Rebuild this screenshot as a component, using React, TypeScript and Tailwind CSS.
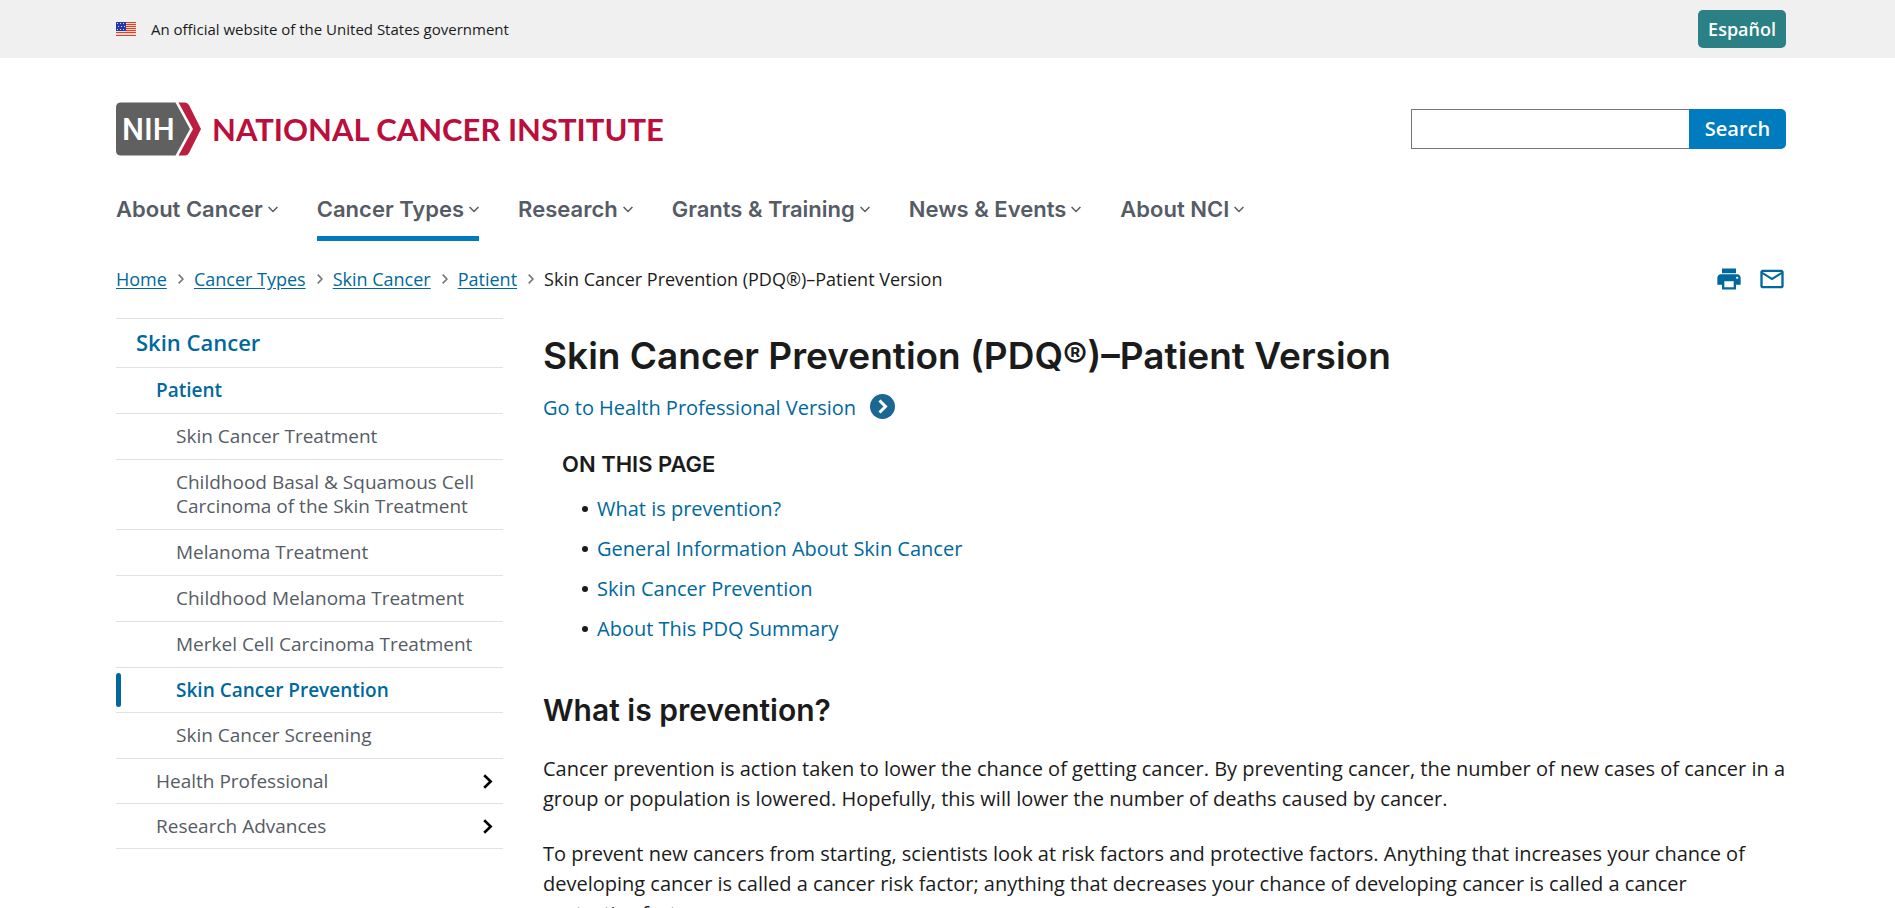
import React from "react";

const topics = [
  { label: "About Cancer", active: false },
  { label: "Cancer Types", active: true },
  { label: "Research", active: false },
  { label: "Grants & Training", active: false },
  { label: "News & Events", active: false },
  { label: "About NCI", active: false },
];

const crumbs = ["Home", "Cancer Types", "Skin Cancer", "Patient"];

const patientPages = [
  "Skin Cancer Treatment",
  "Childhood Basal & Squamous Cell Carcinoma of the Skin Treatment",
  "Melanoma Treatment",
  "Childhood Melanoma Treatment",
  "Merkel Cell Carcinoma Treatment",
  "Skin Cancer Prevention",
  "Skin Cancer Screening",
];

const onThisPage = [
  "What is prevention?",
  "General Information About Skin Cancer",
  "Skin Cancer Prevention",
  "About This PDQ Summary",
];

function Flag() {
  return (
    <svg width="20" height="14" viewBox="0 0 20 14" aria-hidden="true" className="shrink-0">
      <rect width="20" height="14" fill="#fbd9d0" />
      {[0, 2, 4, 6, 8, 10, 13].map((y) => (
        <rect key={y} y={y} width="20" height="1" fill="#e0402a" />
      ))}
      <rect width="10" height="9" fill="#2438a8" />
      {[1, 4, 7].map((y) =>
        [1, 4, 7].map((x) => (
          <rect key={`${x}-${y}`} x={x + (y === 4 ? 1 : 0)} y={y} width="1" height="1" fill="#d5dcf8" />
        )),
      )}
    </svg>
  );
}

function Logo() {
  return (
    <a href="#home" className="flex items-center gap-[11px]" aria-label="NIH National Cancer Institute">
      <svg width="85" height="54" viewBox="0 0 85 54" aria-hidden="true">
        <path d="M5 0.5H59.500L74 27 59.500 53.500H5Q0 53.500 0 48.500V5.500Q0 0.500 5 0.500Z" fill="#606060" />
        <path d="M62.500 0.500H69Q71.500 0.500 73 3L85 27 73 51Q71.500 53.500 69 53.500H62.500L77 27Z" fill="#bb1f40" />
        <text x="6" y="38" fontSize="31" fill="#fff" fontFamily="Roboto, sans-serif" fontWeight="500">
          NIH
        </text>
      </svg>
      <span className="font-['Lato',sans-serif] text-[31px] leading-[54px] font-bold text-[#bb0e3d]">
        NATIONAL CANCER INSTITUTE
      </span>
    </a>
  );
}

function NavChevron() {
  return (
    <svg width="10" height="7" viewBox="0 0 10 7" fill="none" stroke="#565c65" strokeWidth="1.5" aria-hidden="true">
      <path d="M0.600 0.900 5 5.500 9.400 0.900" />
    </svg>
  );
}

function CrumbChevron() {
  return (
    <svg width="6" height="10" viewBox="0 0 6 10" fill="none" stroke="#71767a" strokeWidth="1.600" aria-hidden="true">
      <path d="M0.700 0.600 5 5 0.700 9.400" />
    </svg>
  );
}

function SideChevron() {
  return (
    <svg width="10" height="15" viewBox="0 0 10 15" fill="none" stroke="#000" strokeWidth="2.600" aria-hidden="true">
      <path d="M1.200 1.200 7.700 7.500 1.200 13.800" />
    </svg>
  );
}

function SideLink({ label, active }: { label: string; active: boolean }) {
  return (
    <li className="relative border-b border-[#dfe1e2]">
      {active && <span className="absolute inset-y-[5px] left-0 w-[5px] rounded-full bg-[#00689d]" />}
      <a
        href="#page"
        className={
          active
            ? "block py-[10px] pr-5 pl-[60px] font-semibold text-[#00689d]"
            : "block pt-[10px] pr-5 pb-[11px] pl-[60px]"
        }
        aria-current={active ? "page" : undefined}
      >
        {label}
      </a>
    </li>
  );
}

export default function App() {
  return (
    <div className="min-h-screen bg-white font-['Open_Sans',sans-serif] text-[#1b1b1b]">
      <div className="flex h-[58px] items-center justify-between bg-[#f0f0f0] pr-[109px] pl-[116px]">
        <div className="flex items-center gap-[15px] text-[15px]">
          <Flag />
          <span>An official website of the United States government</span>
        </div>
        <a
          href="#espanol"
          lang="es"
          className="flex h-[38px] items-center rounded-[5px] bg-[#2a8084] px-[10px] text-[18px] font-semibold text-white"
        >
          Español
        </a>
      </div>

      <header className="pr-[109px] pl-[116px]">
        <div className="flex items-center justify-between pt-11">
          <Logo />
          <form className="flex h-10" role="search" onSubmit={(e) => e.preventDefault()}>
            <input
              type="search"
              aria-label="Search"
              className="w-[278px] border border-r-0 border-[#71767a] bg-white px-2 text-[18px] outline-none"
            />
            <button type="submit" className="w-[97px] rounded-r-[5px] bg-[#007bbd] text-[20px] font-semibold text-white">
              Search
            </button>
          </form>
        </div>

        <nav aria-label="Primary" className="mt-[30px] flex gap-[39px] font-['Inter',sans-serif] text-[22px] leading-[30px] font-semibold text-[#565c65]">
          {topics.map((t) => (
            <button
              key={t.label}
              type="button"
              className={
                t.active
                  ? "flex items-center gap-[5px] border-b-[5px] border-[#007bbd] pt-2 pb-[12px]"
                  : "flex items-center gap-[5px] border-b-[5px] border-transparent pt-2 pb-[12px]"
              }
            >
              {t.label}
              <NavChevron />
            </button>
          ))}
        </nav>
      </header>

      <div className="flex items-center justify-between pt-[22px] pr-[109px] pl-[116px]">
        <nav aria-label="Breadcrumb">
          <ol className="flex items-center text-[18px] leading-[32px]">
            {crumbs.map((c) => (
              <li key={c} className="flex items-center">
                <a href="#crumb" className="text-[#00689d] underline underline-offset-2">
                  {c}
                </a>
                <span className="pr-[10px] pl-[11px]">
                  <CrumbChevron />
                </span>
              </li>
            ))}
            <li aria-current="page">Skin Cancer Prevention (PDQ®)–Patient Version</li>
          </ol>
        </nav>
        <div className="flex gap-[15px]">
          <button type="button" aria-label="Print">
            <svg width="28" height="28" viewBox="0 0 24 24" fill="#00689d">
              <path d="M19 8H5c-1.660 0-3 1.340-3 3v6h4v4h12v-4h4v-6c0-1.660-1.340-3-3-3zm-3 11H8v-5h8v5zm3-7c-.55 0-1-.45-1-1s.45-1 1-1 1 .45 1 1-.45 1-1 1zm-1-9H6v4h12V3z" />
            </svg>
          </button>
          <button type="button" aria-label="Email">
            <svg width="28" height="28" viewBox="0 0 24 24" fill="#00689d">
              <path d="M22 6c0-1.100-.9-2-2-2H4c-1.100 0-2 .9-2 2v12c0 1.100.9 2 2 2h16c1.100 0 2-.9 2-2V6zm-2 0-8 5-8-5h16zm0 12H4V8l8 5 8-5v10z" />
            </svg>
          </button>
        </div>
      </div>

      <div className="flex items-start gap-10 pt-[23px] pr-[109px] pl-[116px]">
        <nav aria-label="Section" className="w-[387px] shrink-0 text-[19px] leading-[24px] text-[#565c65]">
          <ul className="border-t border-[#dfe1e2]">
            <li className="border-b border-[#dfe1e2]">
              <a href="#skin" className="block pt-[10px] pb-3 pl-5 text-[22px] leading-[26px] font-semibold text-[#00689d]">
                Skin Cancer
              </a>
            </li>
            <li className="border-b border-[#dfe1e2]">
              <a href="#patient" className="block pt-[10px] pb-[11px] pl-10 font-semibold text-[#00689d]">
                Patient
              </a>
            </li>
            {patientPages.map((p) => (
              <SideLink key={p} label={p} active={p === "Skin Cancer Prevention"} />
            ))}
            {["Health Professional", "Research Advances"].map((p) => (
              <li key={p} className="border-b border-[#dfe1e2]">
                <a href="#section" className="flex items-center justify-between py-[10px] pr-[10px] pl-10">
                  {p}
                  <SideChevron />
                </a>
              </li>
            ))}
          </ul>
        </nav>

        <main className="min-w-0 flex-1">
          <h1 className="pt-[14px] font-['Inter',sans-serif] text-[37px] leading-[48px] font-semibold">
            Skin Cancer Prevention (PDQ®)–Patient Version
          </h1>
          <a href="#hp" className="mt-3 flex items-center gap-[14px] text-[20px] leading-[32px] text-[#00689d]">
            Go to Health Professional Version
            <svg width="25" height="25" viewBox="0 0 25 25" aria-hidden="true" className="mb-1">
              <circle cx="12.5" cy="12.5" r="12.500" fill="#1a6891" />
              <path d="M9.500 6.500 15.500 12.500 9.500 18.500" fill="none" stroke="#fff" strokeWidth="3" />
            </svg>
          </a>

          <nav aria-label="On this page" className="pt-[25px] pl-[19px]">
            <h2 className="font-['Inter',sans-serif] text-[22px] leading-[30px] font-semibold">ON THIS PAGE</h2>
            <ul className="mt-[10px] pl-5 text-[20px] leading-[40px]">
              {onThisPage.map((t) => (
                <li key={t} className="flex items-center gap-[9px]">
                  <span className="h-1.5 w-1.5 rounded-full bg-[#1b1b1b]" />
                  <a href="#part" className="text-[#00689d]">
                    {t}
                  </a>
                </li>
              ))}
            </ul>
          </nav>

          <section className="pt-[41px]">
            <h2 className="font-['Inter',sans-serif] text-[30px] leading-[40px] font-semibold">What is prevention?</h2>
            <div className="flex flex-col gap-[25px] pt-[24px] text-[20px] leading-[30px]">
              <p>
                Cancer prevention is action taken to lower the chance of getting cancer. By preventing cancer, the number of
                new cases of cancer in a group or population is lowered. Hopefully, this will lower the number of deaths
                caused by cancer.
              </p>
              <p>
                To prevent new cancers from starting, scientists look at risk factors and protective factors. Anything that
                increases your chance of developing cancer is called a cancer risk factor; anything that decreases your
                chance of developing cancer is called a cancer protective&nbsp;factor.
              </p>
            </div>
          </section>
        </main>
      </div>
    </div>
  );
}
